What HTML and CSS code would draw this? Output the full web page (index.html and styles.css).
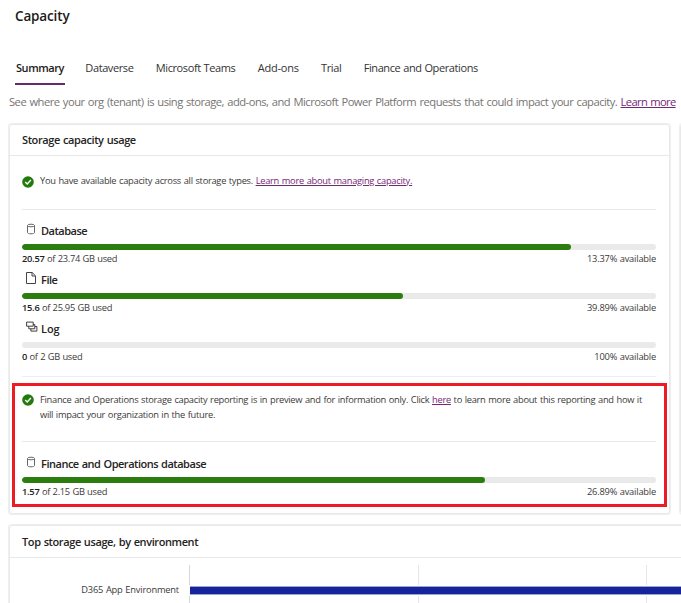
FILE: index.html
```html
<!DOCTYPE html>
<html lang="en">
<head>
<meta charset="utf-8">
<title>Capacity</title>
<link rel="stylesheet" href="styles.css">
</head>
<body>
<svg class="defs" aria-hidden="true">
  <symbol id="ok" viewBox="0 0 12 12"><circle cx="6" cy="6" r="5.8" fill="#217a0b"/><path d="M3.2 6.1l2 1.9 3.7-3.9" fill="none" stroke="#fff" stroke-width="1.4"/></symbol>
  <symbol id="db" viewBox="0 0 10 12"><path d="M1.5 2.7v6.8c0 .8 1.4 1.3 3.5 1.3s3.5-.5 3.5-1.3V2.7" fill="none" stroke="#666" stroke-width="1"/><ellipse cx="5" cy="2.5" rx="3.5" ry="1.3" fill="none" stroke="#666" stroke-width="1"/></symbol>
  <symbol id="file" viewBox="0 0 10 12"><path d="M.5.5h5.7l3.3 3.3v7.7h-9zM6 .7V4h3.3" fill="none" stroke="#444" stroke-width="1"/></symbol>
  <symbol id="log" viewBox="0 0 12 12"><g fill="#fff" stroke="#443c3c" stroke-width="1"><path d="M4.9 5.5h6v4.6h-6z"/><path d="M2.8 3.5h6v4.3h-6z"/><path d="M.6 1.1h6.6v4.1H.6z"/></g></symbol>
</svg>
<main class="page">
  <h1 class="title">Capacity</h1>
  <nav class="tabs">
    <a class="tab active">Summary</a>
    <a class="tab">Dataverse</a>
    <a class="tab">Microsoft Teams</a>
    <a class="tab addons">Add-ons</a>
    <a class="tab">Trial</a>
    <a class="tab">Finance and Operations</a>
  </nav>
  <p class="intro">See where your org (tenant) is using storage, add-ons, and Microsoft Power Platform requests that could impact your capacity. <a class="link tight">Learn more</a></p>
  <div class="row">
    <section class="card usage">
      <h2 class="card-head">Storage capacity usage</h2>
      <div class="card-body">
        <div class="notice first"><svg class="ok"><use href="#ok"/></svg><p>You have available capacity across all storage types. <a class="link">Learn more about managing capacity.</a></p></div>
        <div class="meter">
          <h3><svg class="db"><use href="#db"/></svg><span class="snug">Database</span></h3>
          <div class="track"><div class="fill" style="width:86.6%"></div></div>
          <div class="stats"><span><b>20.57</b> of 23.74 GB used</span><span>13.37% available</span></div>
        </div>
        <div class="meter">
          <h3><svg class="file"><use href="#file"/></svg><span>File</span></h3>
          <div class="track"><div class="fill" style="width:60.1%"></div></div>
          <div class="stats"><span><b>15.6</b> of 25.95 GB used</span><span>39.89% available</span></div>
        </div>
        <div class="meter">
          <h3><svg class="log"><use href="#log"/></svg><span class="loose">Log</span></h3>
          <div class="track"></div>
          <div class="stats"><span><b>0</b> of 2 GB used</span><span>100% available</span></div>
        </div>
        <div class="notice second"><svg class="ok"><use href="#ok"/></svg><p>Finance and Operations storage capacity reporting is in preview and for information only. Click <a class="link">here</a> to learn more about this reporting and how it<br>will impact your organization in the future.</p></div>
        <div class="meter">
          <h3><svg class="db"><use href="#db"/></svg><span>Finance and Operations database</span></h3>
          <div class="track"><div class="fill" style="width:73.1%"></div></div>
          <div class="stats"><span><b>1.57</b> of 2.15 GB used</span><span>26.89% available</span></div>
        </div>
      </div>
      <div class="highlight"></div>
    </section>
    <section class="card next"></section>
  </div>
  <section class="card top">
    <h2 class="card-head">Top storage usage, by environment</h2>
    <div class="chart">
      <div class="label">D365 App Environment</div>
      <div class="plot"><div class="bar"></div></div>
    </div>
  </section>
</main>
</body>
</html>
```
FILE: styles.css
```css
* { box-sizing: border-box; }
body { margin: 0; background: #fff; color: #3b3a39; font-family: "Open Sans", "Noto Sans", sans-serif; }
h1, h2, h3, p { margin: 0; }
.defs { position: absolute; width: 0; height: 0; }
.page { width: 681px; height: 603px; overflow: hidden; }
.title { padding-left: 15px; height: 58px; font-size: 13.5px; font-weight: 600; line-height: 32px; letter-spacing: -.15px; color: #1b1a19; }
.tabs { display: flex; gap: 20.3px; height: 27px; padding-left: 15px; }
.tab { height: 27px; padding: 0 1px; font-size: 11px; line-height: 20px; letter-spacing: -.4px; word-spacing: .4px; white-space: nowrap; color: #333; }
.tab.addons { letter-spacing: -.2px; }
.tab.active { margin-right: -1px; font-weight: 600; letter-spacing: -.43px; color: #1b1a19; border-bottom: 2px solid #6a2a70; }
.intro { height: 39px; padding-left: 9px; font-size: 11.2px; line-height: 34px; letter-spacing: -.515px; word-spacing: .9px; color: #767472; white-space: nowrap; }
.link { color: #742774; text-decoration: underline; text-underline-offset: 1px; }
.tight { letter-spacing: -.64px; }
.row { display: flex; gap: 10px; height: 401px; padding-left: 9px; }
.card { border: 1px solid #e9e9e9; border-radius: 3px; box-shadow: 0 0 1px 0.5px #eee; }
.usage { position: relative; flex: 0 0 661px; height: 390px; }
.next { flex: 0 0 300px; height: 390px; }
.card-head { height: 31px; padding-left: 12px; border-bottom: 1px solid #e8e8e8; font-size: 11px; line-height: 30px; font-weight: 600; letter-spacing: -.4px; word-spacing: .6px; color: #252423; }
.card-body { padding: 0 13px 0 12px; }
.notice { display: flex; gap: 6px; border-bottom: 1px solid #eaeaea; font-size: 9.3px; line-height: 14.5px; letter-spacing: -.28px; word-spacing: .6px; white-space: nowrap; }
.notice .ok { width: 12px; height: 12px; flex: none; margin-top: 2px; }
.notice.first { height: 54px; padding-top: 18px; margin-bottom: 10px; }
.notice.second { height: 66px; padding-top: 16px; margin-bottom: 11px; border-top: 1px solid #eee; margin-top: 9px; }
.notice.second .ok { margin-top: 1px; }
.notice.first .link { letter-spacing: -.27px; }
.meter { height: 49px; }
.meter h3 { display: flex; height: 24px; font-size: 11px; line-height: 21px; font-weight: 600; letter-spacing: -.48px; word-spacing: .6px; color: #252423; }
.meter h3 svg { flex: none; margin: 3px 5px 0 4px; width: 10px; height: 12px; }
.meter h3 svg.log { width: 12px; margin-right: 3px; }
.meter h3 .snug { letter-spacing: -.5px; }
.meter h3 .loose { letter-spacing: -.1px; }
.track { height: 6px; border-radius: 3px; background: #eaeaea; overflow: hidden; }
.fill { height: 100%; border-radius: 3px; background: #2b7d10; }
.stats { display: flex; justify-content: space-between; font-size: 9.3px; line-height: 17px; letter-spacing: -.26px; word-spacing: .3px; }
.stats span:last-child { letter-spacing: -.2px; }
.stats b { font-weight: 600; color: #222; }
.highlight { position: absolute; left: 2px; top: 258px; width: 655px; height: 124px; border: 3px solid #ed1c24; }
.top { width: 700px; height: 120px; margin-left: 9px; }
.top .card-head { height: 32px; line-height: 31px; }
.chart { display: flex; padding-top: 7px; }
.label { width: 169px; margin-right: 10px; text-align: right; font-size: 9.3px; line-height: 49px; letter-spacing: -.19px; word-spacing: .5px; }
.plot { flex: 1; height: 60px; padding-top: 21px; border-left: 1px solid #d5d5e3; background: linear-gradient(#e6e6e6, #e6e6e6) 228px 0 / 1px 100% no-repeat, linear-gradient(#e6e6e6, #e6e6e6) 456px 0 / 1px 100% no-repeat; }
.bar { height: 9px; background: #15249a; border: solid #9da3d2; border-width: 1px 0; box-shadow: 0 0 0 1px #fff; }
```
